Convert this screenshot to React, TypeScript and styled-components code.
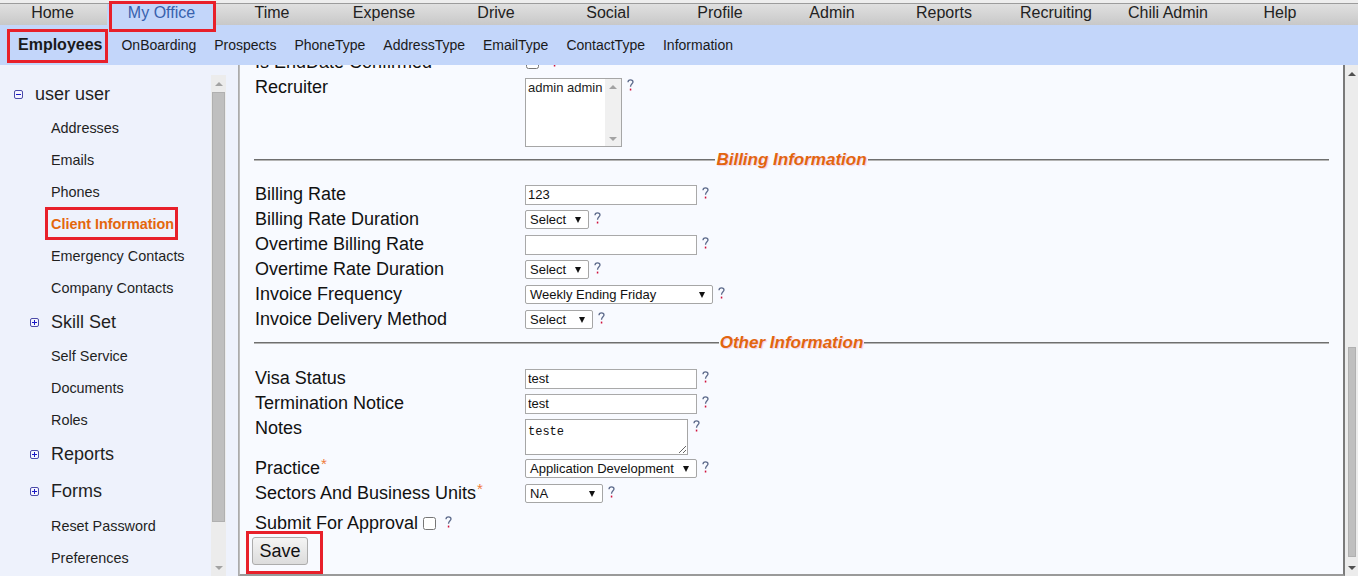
import styled, { createGlobalStyle } from "styled-components";

const GlobalStyle = createGlobalStyle`
  html, body { margin: 0; padding: 0; }
  body {
    font-family: "Liberation Sans", Arial, sans-serif;
    background: #ffffff;
    overflow: hidden;
  }
`;

const Page = styled.div`
  width: 1358px;
  height: 576px;
  display: flex;
  flex-direction: column;
  overflow: hidden;
`;

const TopStrip = styled.div`
  height: 3px;
  background: #eeeeee;
`;

const TopNav = styled.nav`
  display: flex;
  height: 21px;
  margin-left: -2px;
  border-top: 1px solid #9c9c9c;
  background: linear-gradient(#e0e0e0, #c8c8c8);
`;

const NavItem = styled.a<{ $w: number; $active?: boolean }>`
  position: relative;
  flex: 0 0 ${(p) => p.$w}px;
  text-align: center;
  font-size: 16px;
  line-height: 17px;
  color: ${(p) => (p.$active ? "#3761ad" : "#222222")};
  background: ${(p) => (p.$active ? "#c3d6fa" : "transparent")};

  ${(p) =>
    p.$active &&
    `
    &::after {
      content: "";
      position: absolute;
      left: 2px;
      right: 0;
      top: -3px;
      bottom: -7px;
      border: 3px solid #e8202a;
      z-index: 3;
    }
  `}
`;

const SubNav = styled.nav`
  display: flex;
  align-items: stretch;
  height: 40px;
  padding-left: 9px;
  background: #c3d6fa;
`;

const SubItem = styled.a<{ $current?: boolean }>`
  position: relative;
  display: flex;
  align-items: center;
  padding: 0 ${(p) => (p.$current ? 10 : 9)}px 0 ${(p) => (p.$current ? 9 : 9)}px;
  font-size: ${(p) => (p.$current ? 16 : 14)}px;
  font-weight: ${(p) => (p.$current ? 700 : 400)};
  color: #1a1a1a;

  ${(p) =>
    p.$current &&
    `
    &::after {
      content: "";
      position: absolute;
      left: -2px;
      right: 4px;
      top: 4px;
      bottom: 2px;
      border: 3px solid #e8202a;
    }
  `}
`;

const Body = styled.div`
  flex: 1;
  display: flex;
  min-height: 0;
`;

const Sidebar = styled.aside`
  display: flex;
  flex: 0 0 238px;
  border-right: 1px solid #ababab;
  background: #eef2fc;
`;

const SideList = styled.ul`
  list-style: none;
  margin: 0;
  padding: 11px 0 0;
  flex: 0 0 211px;
`;

const SideItem = styled.li<{ $level: number; $h: number }>`
  display: flex;
  align-items: center;
  height: ${(p) => p.$h}px;
  padding-left: ${(p) => (p.$level === 0 ? 14 : 30)}px;
  font-size: ${(p) => (p.$h > 32 ? 18 : 14.4)}px;
  color: #1f1f1f;
  white-space: nowrap;
`;

const ToggleSlot = styled.span`
  flex: 0 0 21px;
  display: flex;
  align-items: center;
`;

const SideLink = styled.a<{ $active?: boolean }>`
  position: relative;
  color: ${(p) => (p.$active ? "#e4670c" : "#1f1f1f")};
  font-weight: ${(p) => (p.$active ? 700 : 400)};

  ${(p) =>
    p.$active &&
    `
    &::after {
      content: "";
      position: absolute;
      left: -6px;
      right: -4px;
      top: -9px;
      bottom: -8px;
      border: 3px solid #e8202a;
    }
  `}
`;

const ScrollTrack = styled.div<{ $w: number; $top: number }>`
  flex: 0 0 ${(p) => p.$w}px;
  display: flex;
  flex-direction: column;
  margin-top: ${(p) => p.$top}px;
  background: #ececec;
`;

const ScrollArrow = styled.div<{ $up?: boolean; $dark?: boolean }>`
  flex: 0 0 17px;
  display: flex;
  align-items: center;
  justify-content: center;

  &::before {
    content: "";
    border-left: 4px solid transparent;
    border-right: 4px solid transparent;
    ${(p) => (p.$up ? "border-bottom" : "border-top")}: 4px solid
      ${(p) => (p.$dark ? "#505050" : "#a3a3a3")};
  }
`;

const ScrollSpace = styled.div`
  flex: 1;
`;

const Thumb = styled.div<{ $top: number; $h: number; $side: string }>`
  height: ${(p) => p.$h}px;
  margin: ${(p) => p.$top}px ${(p) => p.$side};
  background: #bfbfbf;
  border: 1px solid #b0b0b0;
  box-sizing: border-box;
`;

const Main = styled.main`
  flex: 1;
  min-width: 0;
  overflow: hidden;
  background: #f8faff;
  border-left: 1px solid #bdbdbd;
  border-right: 2px solid #7a7a7a;
  border-bottom: 2px solid #9a9a9a;
  padding: 0 14px 0 14px;
`;

const Form = styled.form`
  margin-top: -15px;
`;

const Row = styled.div<{ $top?: boolean }>`
  display: grid;
  grid-template-columns: 271px auto;
  align-items: ${(p) => (p.$top ? "start" : "center")};
  min-height: 25px;
`;

const Label = styled.label`
  padding-left: 1px;
  font-size: 18px;
  line-height: 25px;
  color: #111111;
  white-space: nowrap;
`;

const Req = styled.span`
  margin-left: 1px;
  font-size: 15px;
  line-height: 15px;
  vertical-align: top;
  color: #ef7a3a;
`;

const Control = styled.div<{ $top?: boolean }>`
  display: flex;
  align-items: ${(p) => (p.$top ? "flex-start" : "center")};
`;

const TextInput = styled.input`
  box-sizing: border-box;
  width: 172px;
  height: 20px;
  margin: 0;
  padding: 1px 2px;
  border: 1px solid #a9a9a9;
  background: #ffffff;
  font: 13px "Liberation Sans", Arial, sans-serif;
  color: #111111;
  outline: none;
`;

const FakeSelect = styled.div<{ $w: number }>`
  box-sizing: border-box;
  width: ${(p) => p.$w}px;
  height: 19px;
  display: flex;
  align-items: center;
  justify-content: space-between;
  padding: 0 7px 0 4px;
  border: 1px solid #a6a6a6;
  border-radius: 2px;
  background: #ffffff;
  font-size: 13px;
  color: #111111;
  white-space: nowrap;
`;

const Caret = styled.span`
  width: 0;
  height: 0;
  border-left: 3.5px solid transparent;
  border-right: 3.5px solid transparent;
  border-top: 6px solid #111111;
`;

const ListBox = styled.div`
  box-sizing: border-box;
  width: 97px;
  height: 69px;
  margin: 3px 0;
  display: flex;
  border: 1px solid #a6a6a6;
  background: #ffffff;
`;

const ListText = styled.div`
  flex: 1;
  padding: 1px 2px;
  font-size: 13px;
  line-height: 15px;
  white-space: nowrap;
  color: #222222;
`;

const ListScroll = styled.div`
  flex: 0 0 16px;
  display: flex;
  flex-direction: column;
  justify-content: space-between;
  align-items: center;
  padding: 6px 0 5px;
  background: #f0f0f0;
`;

const ListArrow = styled.span<{ $up?: boolean }>`
  width: 0;
  height: 0;
  border-left: 4px solid transparent;
  border-right: 4px solid transparent;
  ${(p) => (p.$up ? "border-bottom" : "border-top")}: 4px solid #a3a3a3;
`;

const Notes = styled.textarea`
  box-sizing: border-box;
  width: 163px;
  height: 36px;
  margin: 3px 0 1px;
  padding: 5px 2px;
  border: 1px solid #a6a6a6;
  background: #ffffff;
  font: 12px "Liberation Mono", monospace;
  color: #111111;
  resize: both;
  outline: none;
`;

const Check = styled.input<{ $gap?: number }>`
  width: 13px;
  height: 13px;
  margin: 0 0 0 ${(p) => p.$gap ?? 1}px;
`;

const HelpMark = styled.svg<{ $gap?: number; $top?: number }>`
  flex: 0 0 7px;
  margin-left: ${(p) => p.$gap ?? 5}px;
  margin-top: ${(p) => p.$top ?? 0}px;
  margin-bottom: ${(p) => (p.$top === undefined ? 3 : 0)}px;
`;

const Divider = styled.div<{ $mt: number; $mb: number }>`
  display: flex;
  align-items: center;
  height: 20px;
  margin: ${(p) => p.$mt}px 0 ${(p) => p.$mb}px;

  &::before,
  &::after {
    content: "";
    flex: 1;
    border-top: 1px solid #6f6f6f;
    border-bottom: 1px solid #b4b4b4;
  }
`;

const DividerTitle = styled.span`
  padding: 0 1px;
  font: italic bold 17px "Liberation Sans", Arial, sans-serif;
  color: #e2650f;
  text-shadow: 1px 1px 1px rgba(236, 170, 200, 0.55);
`;

const SubmitRow = styled.div`
  display: flex;
  align-items: center;
  height: 25px;
  margin-top: 5px;
`;

const SaveButton = styled.button`
  position: relative;
  width: 56px;
  height: 28px;
  margin: 1px 0 0 -2px;
  padding: 0;
  border: 1px solid #acacac;
  border-radius: 3px;
  background: linear-gradient(#f4f4f4, #dcdcdc);
  font: 18px "Liberation Sans", Arial, sans-serif;
  color: #111111;

  &::after {
    content: "";
    position: absolute;
    left: -7px;
    right: -16px;
    top: -7px;
    bottom: -10px;
    border: 3px solid #e8202a;
  }
`;

const Help = ({ gap, top }: { gap?: number; top?: number }) => (
  <HelpMark $gap={gap} $top={top} width="7" height="12" viewBox="0 0 7 12">
    <path
      d="M1 3.3C1 1.7 2.2 0.8 3.5 0.8C4.9 0.8 6 1.7 6 3C6 4.7 3.5 5 3.5 7.7"
      stroke="#5e6b8c"
      strokeWidth="1.3"
      fill="none"
    />
    <rect x="2.8" y="9.6" width="1.5" height="1.9" fill="#d0103a" />
  </HelpMark>
);

const Toggle = ({ open }: { open?: boolean }) => (
  <svg width="9" height="9" viewBox="0 0 9 9">
    <rect x="0.5" y="0.5" width="8" height="8" rx="1.5" fill="#f6f6ff" stroke="#4b4ba8" />
    <path d="M2 4.5h5" stroke="#1a1ac8" />
    {!open && <path d="M4.5 2v5" stroke="#1a1ac8" />}
  </svg>
);

const Select = ({ w, text }: { w: number; text: string }) => (
  <FakeSelect $w={w}>
    <span>{text}</span>
    <Caret />
  </FakeSelect>
);

const topMenu = [
  "Home", "My Office", "Time", "Expense", "Drive", "Social",
  "Profile", "Admin", "Reports", "Recruiting", "Chili Admin", "Help",
];

const subMenu = [
  "OnBoarding", "Prospects", "PhoneType", "AddressType",
  "EmailType", "ContactType", "Information",
];

type Side = { label: string; level: number; h: number; toggle?: "open" | "closed"; active?: boolean };

const sideMenu: Side[] = [
  { label: "user user", level: 0, h: 36, toggle: "open" },
  { label: "Addresses", level: 1, h: 32 },
  { label: "Emails", level: 1, h: 32 },
  { label: "Phones", level: 1, h: 32 },
  { label: "Client Information", level: 1, h: 32, active: true },
  { label: "Emergency Contacts", level: 1, h: 32 },
  { label: "Company Contacts", level: 1, h: 32 },
  { label: "Skill Set", level: 1, h: 36, toggle: "closed" },
  { label: "Self Service", level: 1, h: 32 },
  { label: "Documents", level: 1, h: 32 },
  { label: "Roles", level: 1, h: 32 },
  { label: "Reports", level: 1, h: 36, toggle: "closed" },
  { label: "Forms", level: 1, h: 38, toggle: "closed" },
  { label: "Reset Password", level: 1, h: 32 },
  { label: "Preferences", level: 1, h: 32 },
];

export default function App() {
  return (
    <Page>
      <GlobalStyle />
      <TopStrip />
      <TopNav>
        {topMenu.map((m, i) => (
          <NavItem key={m} $w={i < 2 ? 109 : 112} $active={m === "My Office"}>
            {m}
          </NavItem>
        ))}
      </TopNav>
      <SubNav>
        <SubItem $current>Employees</SubItem>
        {subMenu.map((m) => (
          <SubItem key={m}>{m}</SubItem>
        ))}
      </SubNav>
      <Body>
        <Sidebar>
          <SideList>
            {sideMenu.map((s) => (
              <SideItem key={s.label} $level={s.level} $h={s.h}>
                <ToggleSlot>{s.toggle && <Toggle open={s.toggle === "open"} />}</ToggleSlot>
                <SideLink $active={s.active}>{s.label}</SideLink>
              </SideItem>
            ))}
          </SideList>
          <ScrollTrack $w={15} $top={10}>
            <ScrollArrow $up />
            <ScrollSpace>
              <Thumb $top={0} $h={430} $side="1px" />
            </ScrollSpace>
            <ScrollArrow />
          </ScrollTrack>
        </Sidebar>

        <Main>
          <Form>
            <Row>
              <Label>Is EndDate Confirmed</Label>
              <Control>
                <Check type="checkbox" readOnly />
                <Help gap={12} />
              </Control>
            </Row>
            <Row $top>
              <Label>Recruiter</Label>
              <Control $top>
                <ListBox>
                  <ListText>admin admin</ListText>
                  <ListScroll>
                    <ListArrow $up />
                    <ListArrow />
                  </ListScroll>
                </ListBox>
                <Help top={4} />
              </Control>
            </Row>

            <Divider $mt={0} $mb={12}>
              <DividerTitle>Billing Information</DividerTitle>
            </Divider>

            <Row>
              <Label>Billing Rate</Label>
              <Control>
                <TextInput readOnly value="123" />
                <Help />
              </Control>
            </Row>
            <Row>
              <Label>Billing Rate Duration</Label>
              <Control>
                <Select w={64} text="Select" />
                <Help />
              </Control>
            </Row>
            <Row>
              <Label>Overtime Billing Rate</Label>
              <Control>
                <TextInput readOnly value="" />
                <Help />
              </Control>
            </Row>
            <Row>
              <Label>Overtime Rate Duration</Label>
              <Control>
                <Select w={64} text="Select" />
                <Help />
              </Control>
            </Row>
            <Row>
              <Label>Invoice Frequency</Label>
              <Control>
                <Select w={188} text="Weekly Ending Friday" />
                <Help />
              </Control>
            </Row>
            <Row>
              <Label>Invoice Delivery Method</Label>
              <Control>
                <Select w={68} text="Select" />
                <Help />
              </Control>
            </Row>

            <Divider $mt={1} $mb={13}>
              <DividerTitle>Other Information</DividerTitle>
            </Divider>

            <Row>
              <Label>Visa Status</Label>
              <Control>
                <TextInput readOnly value="test" />
                <Help />
              </Control>
            </Row>
            <Row>
              <Label>Termination Notice</Label>
              <Control>
                <TextInput readOnly value="test" />
                <Help />
              </Control>
            </Row>
            <Row $top>
              <Label>Notes</Label>
              <Control $top>
                <Notes readOnly value="teste" />
                <Help top={4} />
              </Control>
            </Row>
            <Row>
              <Label>
                Practice<Req>*</Req>
              </Label>
              <Control>
                <Select w={172} text="Application Development" />
                <Help />
              </Control>
            </Row>
            <Row>
              <Label>
                Sectors And Business Units<Req>*</Req>
              </Label>
              <Control>
                <Select w={78} text="NA" />
                <Help />
              </Control>
            </Row>

            <SubmitRow>
              <Label>Submit For Approval</Label>
              <Check type="checkbox" readOnly $gap={5} />
              <Help gap={9} />
            </SubmitRow>
            <SaveButton type="button">Save</SaveButton>
          </Form>
        </Main>

        <ScrollTrack $w={13} $top={0}>
          <ScrollArrow $up $dark />
          <ScrollSpace>
            <Thumb $top={265} $h={210} $side="2px 0 3px" />
          </ScrollSpace>
          <ScrollArrow $dark />
        </ScrollTrack>
      </Body>
    </Page>
  );
}
